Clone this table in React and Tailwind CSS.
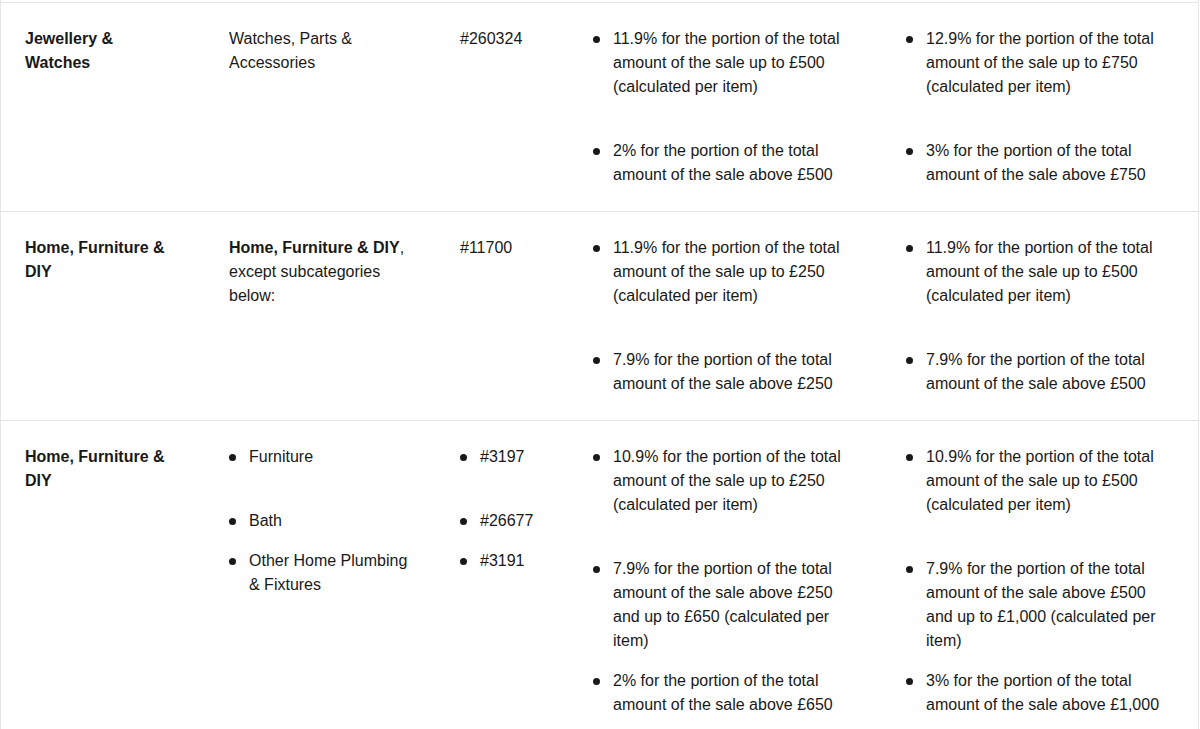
// Fee table excerpt: category rows with bulleted fee tiers.

import React from 'react';

const COLS = ['w-[204px]', 'w-[231px]', 'w-[133px]', 'w-[313px]', 'w-[316px]'];

const ROWS = [
  {
    category: 'Jewellery & Watches',
    sub: { text: 'Watches, Parts & Accessories' },
    ids: '#260324',
    fees1: [
      '11.9% for the portion of the total amount of the sale up to £500 (calculated per item)',
      '2% for the portion of the total amount of the sale above £500',
    ],
    fees2: [
      '12.9% for the portion of the total amount of the sale up to £750 (calculated per item)',
      '3% for the portion of the total amount of the sale above £750',
    ],
  },
  {
    category: 'Home, Furniture & DIY',
    sub: { bold: 'Home, Furniture & DIY', text: ', except subcategories below:' },
    ids: '#11700',
    fees1: [
      '11.9% for the portion of the total amount of the sale up to £250 (calculated per item)',
      '7.9% for the portion of the total amount of the sale above £250',
    ],
    fees2: [
      '11.9% for the portion of the total amount of the sale up to £500 (calculated per item)',
      '7.9% for the portion of the total amount of the sale above £500',
    ],
  },
  {
    category: 'Home, Furniture & DIY',
    sub: ['Furniture', 'Bath', 'Other Home Plumbing & Fixtures'],
    ids: ['#3197', '#26677', '#3191'],
    fees1: [
      '10.9% for the portion of the total amount of the sale up to £250 (calculated per item)',
      '7.9% for the portion of the total amount of the sale above £250 and up to £650 (calculated per item)',
      '2% for the portion of the total amount of the sale above £650',
    ],
    fees2: [
      '10.9% for the portion of the total amount of the sale up to £500 (calculated per item)',
      '7.9% for the portion of the total amount of the sale above £500 and up to £1,000 (calculated per item)',
      '3% for the portion of the total amount of the sale above £1,000',
    ],
  },
];

const Bullets = ({ items }) => (
  <ul>
    {items.map((item, i) => (
      <li key={i} className={`flex gap-[13px] ${i === 0 ? 'mb-10' : 'mb-4'} last:mb-0`}>
        <span className="mt-[9px] h-[7px] w-[7px] flex-shrink-0 rounded-full bg-[#191919]" />
        <span>{item}</span>
      </li>
    ))}
  </ul>
);

const Cell = ({ col, children }) => (
  <div className={`${COLS[col]} flex-shrink-0 px-6 pt-6 pb-6`}>{children}</div>
);

const App = () => {
  return (
    <div
      className="min-h-screen bg-white text-[16px] leading-6 text-[#191919]"
      style={{ fontFamily: '"Liberation Sans", Arial, sans-serif' }}
    >
      <div className="w-[1199px] min-h-screen border-x border-[#e5e5e5] pt-[2px]">
        {ROWS.map((row, idx) => (
          <div key={idx} className="flex border-t border-[#e5e5e5]">
            <Cell col={0}>
              <span className="font-bold">{row.category}</span>
            </Cell>
            <Cell col={1}>
              {Array.isArray(row.sub) ? (
                <Bullets items={row.sub} />
              ) : (
                <p>
                  {row.sub.bold && <span className="font-bold">{row.sub.bold}</span>}
                  {row.sub.text}
                </p>
              )}
            </Cell>
            <Cell col={2}>
              {Array.isArray(row.ids) ? <Bullets items={row.ids} /> : <p>{row.ids}</p>}
            </Cell>
            <Cell col={3}>
              <Bullets items={row.fees1} />
            </Cell>
            <Cell col={4}>
              <Bullets items={row.fees2} />
            </Cell>
          </div>
        ))}
      </div>
    </div>
  );
};

export default App;
